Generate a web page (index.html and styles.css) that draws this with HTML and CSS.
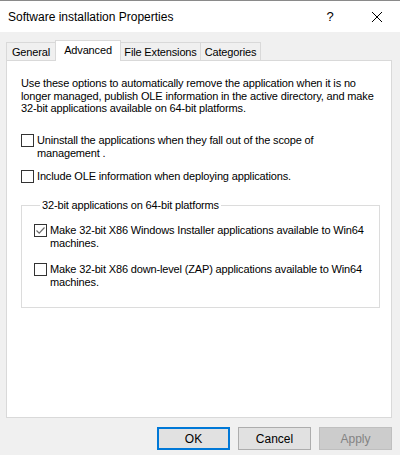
FILE: index.html
```html
<!DOCTYPE html>
<html lang="en">
<head>
    <meta charset="UTF-8">
    <meta name="viewport" content="width=device-width, initial-scale=1.0">
    <title>Software installation Properties</title>
    <link rel="stylesheet" href="styles.css">
</head>
<body>
    <div class="window">
        <header class="titlebar">
            <span class="title">Software installation Properties</span>
            <span class="help">?</span>
            <span class="close">
                <svg width="12" height="12" viewBox="0 0 12 12">
                    <path d="M1 1 L11 11 M11 1 L1 11" stroke="#000" stroke-width="1" fill="none"/>
                </svg>
            </span>
        </header>

        <main class="content">
            <div class="tabs">
                <div class="tab tab-general">General</div>
                <div class="tab tab-active">Advanced</div>
                <div class="tab tab-ext">File Extensions</div>
                <div class="tab tab-cat">Categories</div>
            </div>

            <section class="panel">
                <p class="intro">Use these options to automatically remove the application when it is no<br>longer managed, publish OLE information in the active directory, and make<br>32-bit applications available on 64-bit platforms.</p>

                <label class="option opt-first">
                    <span class="box"></span>
                    <span class="option-text">Uninstall the applications when they fall out of the scope of<br>management .</span>
                </label>
                <label class="option opt-second">
                    <span class="box"></span>
                    <span class="option-text">Include OLE information when deploying applications.</span>
                </label>

                <fieldset class="group">
                    <legend>32-bit applications on 64-bit platforms</legend>
                    <label class="option group-first">
                        <span class="box">
                            <svg width="11" height="11" viewBox="0 0 11 11">
                                <path d="M1.5 5.5 L4.2 8.2 L9.5 2.5" stroke="#6b6b6b" stroke-width="1.2" fill="none"/>
                            </svg>
                        </span>
                        <span class="option-text">Make 32-bit X86 Windows Installer applications available to Win64<br>machines.</span>
                    </label>
                    <label class="option group-second">
                        <span class="box"></span>
                        <span class="option-text">Make 32-bit X86 down-level (ZAP) applications available to Win64<br>machines.</span>
                    </label>
                </fieldset>
            </section>

            <footer class="buttons">
                <button type="button" class="btn btn-default">OK</button>
                <button type="button" class="btn">Cancel</button>
                <button type="button" class="btn" disabled>Apply</button>
            </footer>
        </main>
    </div>
</body>
</html>
```

FILE: styles.css
```css
body {
    margin: 0;
    background-color: #f0f0f0;
    font-family: "Liberation Sans", Arial, sans-serif;
    font-size: 11px;
    letter-spacing: -0.15px;
    color: #000000;
}
.window {
    width: 400px;
    height: 455px;
    overflow: hidden;
    background-color: #f0f0f0;
}
.titlebar {
    height: 31px;
    border-top: 1px solid #8a8a8a;
    background-color: #ffffff;
    display: flex;
    align-items: center;
    letter-spacing: 0;
}
.title {
    flex: 1;
    padding-left: 8px;
    font-size: 12px;
}
.help {
    width: 12px;
    text-align: center;
    font-size: 13px;
    margin-right: 35px;
}
.close {
    display: flex;
    margin-right: 17px;
}
.content {
    padding-top: 8px;
}
.tabs {
    display: flex;
    align-items: flex-end;
    height: 21px;
    margin-left: 6px;
    margin-bottom: -1px;
    position: relative;
    z-index: 1;
    white-space: nowrap;
}
.tab {
    box-sizing: border-box;
    height: 18px;
    margin-bottom: 1px;
    border: 1px solid #d9d9d9;
    border-bottom: none;
    background-color: #f0f0f0;
    line-height: 18px;
    text-align: center;
}
.tab-general {
    width: 49px;
    border-right: none;
}
.tab-active {
    width: 66px;
    height: 21px;
    margin-bottom: 0;
    background-color: #ffffff;
    line-height: 18px;
}
.tab-ext {
    width: 80px;
    border-left: none;
}
.tab-cat {
    width: 60px;
    border-left: none;
}
.panel {
    box-sizing: border-box;
    height: 358px;
    margin: 0 8px 0 6px;
    border: 1px solid #d9d9d9;
    background-color: #ffffff;
    padding: 16px 12px 0 14px;
    white-space: nowrap;
}
.intro {
    margin: 0;
    line-height: 12.5px;
}
.option {
    display: flex;
    align-items: flex-start;
    line-height: 13px;
}
.box {
    box-sizing: border-box;
    flex: none;
    width: 13px;
    height: 13px;
    margin-right: 3px;
    border: 1px solid #333333;
    background-color: #ffffff;
    display: flex;
    align-items: center;
    justify-content: center;
}
.opt-first {
    margin-top: 19px;
}
.opt-second {
    margin-top: 10px;
}
.group {
    min-width: 0;
    margin: 16px 0 0 0;
    padding: 0 0 18px 12px;
    border: 1px solid #dcdcdc;
    width: 359px;
    box-sizing: border-box;
}
.group legend {
    margin-left: 6px;
    padding: 0 2px;
    line-height: 13px;
}
.group-first {
    margin-top: 12px;
}
.group-second {
    margin-top: 13px;
}
.buttons {
    display: flex;
    justify-content: flex-end;
    gap: 8px;
    margin: 9px 8px 0 0;
}
.btn {
    box-sizing: border-box;
    width: 73px;
    height: 23px;
    padding: 0;
    border: 1px solid #adadad;
    background-color: #e1e1e1;
    font-family: "Liberation Sans", Arial, sans-serif;
    font-size: 12px;
    color: #000000;
}
.btn-default {
    border: 2px solid #0078d7;
}
.btn:disabled {
    background-color: #cccccc;
    border-color: #bfbfbf;
    color: #838383;
}
```
